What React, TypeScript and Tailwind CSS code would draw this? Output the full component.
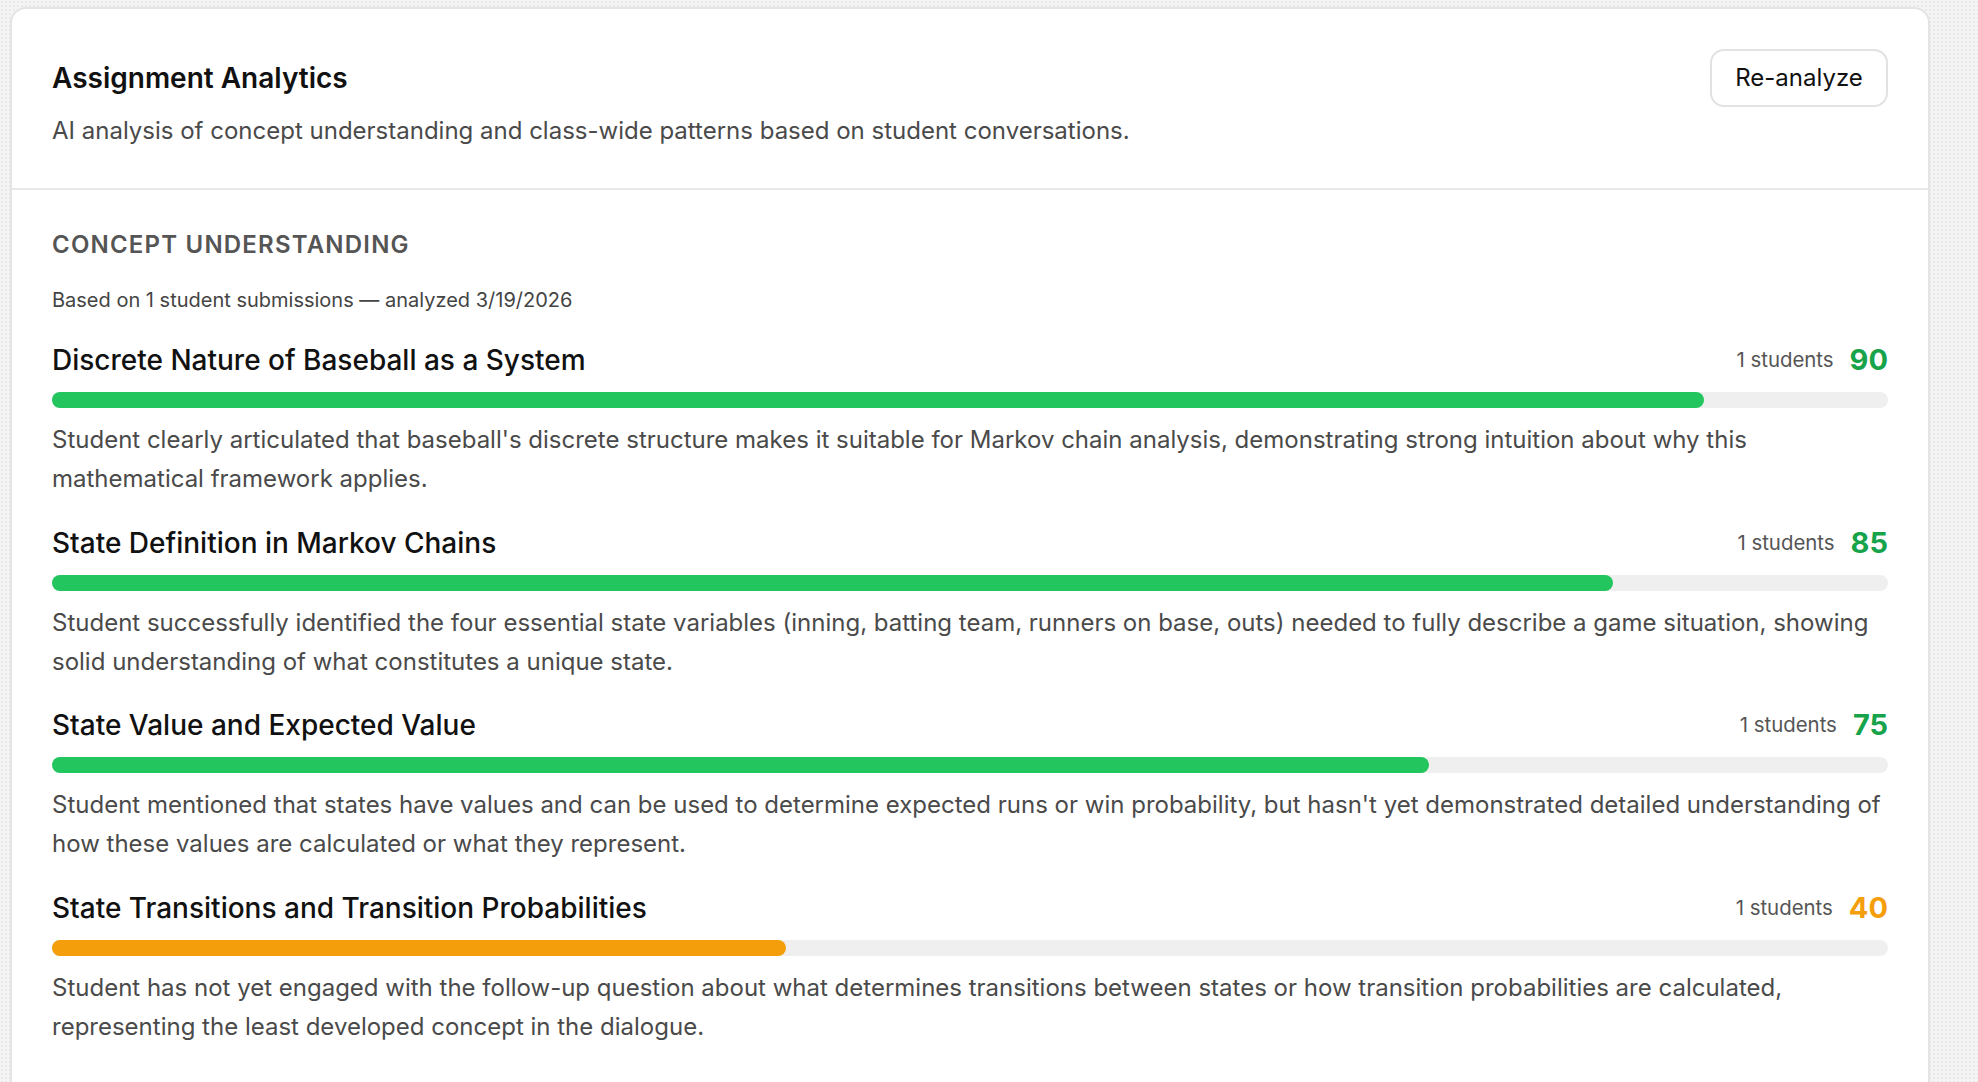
import React from "react";

type Concept = {
  title: string;
  students: number;
  score: number;
  summary: string;
};

const concepts: Concept[] = [
  {
    title: "Discrete Nature of Baseball as a System",
    students: 1,
    score: 90,
    summary:
      "Student clearly articulated that baseball's discrete structure makes it suitable for Markov chain analysis, demonstrating strong intuition about why this mathematical framework applies.",
  },
  {
    title: "State Definition in Markov Chains",
    students: 1,
    score: 85,
    summary:
      "Student successfully identified the four essential state variables (inning, batting team, runners on base, outs) needed to fully describe a game situation, showing solid understanding of what constitutes a unique state.",
  },
  {
    title: "State Value and Expected Value",
    students: 1,
    score: 75,
    summary:
      "Student mentioned that states have values and can be used to determine expected runs or win probability, but hasn't yet demonstrated detailed understanding of how these values are calculated or what they represent.",
  },
  {
    title: "State Transitions and Transition Probabilities",
    students: 1,
    score: 40,
    summary:
      "Student has not yet engaged with the follow-up question about what determines transitions between states or how transition probabilities are calculated, representing the least developed concept in the dialogue.",
  },
];

function ConceptRow({ concept }: { concept: Concept }) {
  const strong = concept.score >= 60;
  return (
    <div className="flex flex-col">
      <div className="flex items-center justify-between h-[36px]">
        <h3 className="text-[28px] font-medium text-[#111111] leading-[36px]">
          {concept.title}
        </h3>
        <div className="flex items-center gap-[16px]">
          <span className="text-[20.4px] text-[#555555] leading-[36px]">
            {concept.students} students
          </span>
          <span
            className={
              strong
                ? "text-[29px] font-bold text-[#16a34a] leading-[36px]"
                : "text-[29px] font-bold text-[#f59e0b] leading-[36px]"
            }
          >
            {concept.score}
          </span>
        </div>
      </div>
      <div className="mt-[14px] h-[16px] w-full rounded-full bg-[#efefef]">
        <div
          className={
            strong
              ? "h-full rounded-full bg-[#22c55e]"
              : "h-full rounded-full bg-[#f59e0b]"
          }
          style={{ width: `${concept.score}%` }}
        />
      </div>
      <p className="mt-[12px] text-[24px] leading-[39px] text-[#4a4a4a]">
        {concept.summary}
      </p>
    </div>
  );
}

export default function App() {
  return (
    <div
      className="min-h-screen bg-[#f4f4f4] bg-[radial-gradient(#e8e8e8_1px,transparent_1px)] bg-[size:4px_4px] pt-[7px] pl-[10px] pb-[40px]"
      style={{ fontFamily: "Inter, 'Noto Sans', sans-serif" }}
    >
      <div className="w-[1920px] rounded-[16px] border-2 border-[#e4e4e4] bg-white">
        <div className="flex items-start justify-between px-[40px] pt-[40px] pb-[39px] border-b-2 border-[#e8e8e8]">
          <div className="flex flex-col pt-[11px]">
            <h1 className="text-[28px] font-semibold leading-[36px] text-[#111111]">
              Assignment Analytics
            </h1>
            <p className="mt-[17px] text-[24px] leading-[36px] text-[#4a4a4a]">
              AI analysis of concept understanding and class-wide patterns based on student conversations.
            </p>
          </div>
          <button className="h-[58px] w-[178px] rounded-[14px] border-2 border-[#e2e2e2] bg-white text-[24px] text-[#111111]">
            Re-analyze
          </button>
        </div>
        <div className="px-[40px] pt-[41px] pb-[80px]">
          <h2 className="text-[24px] font-semibold uppercase tracking-[0.05em] leading-[28px] text-[#555555]">
            Concept Understanding
          </h2>
          <p className="mt-[27px] text-[20px] leading-[28px] text-[#444444]">
            Based on 1 student submissions — analyzed 3/19/2026
          </p>
          <div className="mt-[28px] flex flex-col gap-[26.5px]">
            {concepts.map((c) => (
              <ConceptRow key={c.title} concept={c} />
            ))}
          </div>
        </div>
      </div>
    </div>
  );
}
